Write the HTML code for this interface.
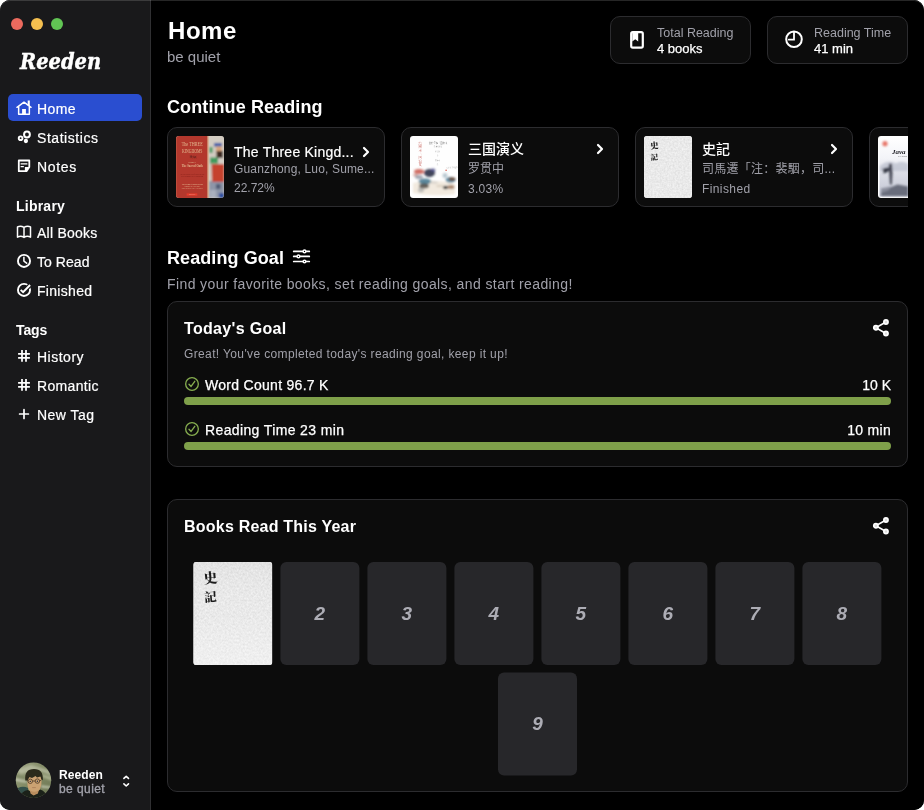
<!DOCTYPE html>
<html lang="en">
<head>
<meta charset="utf-8">
<title>Reeden</title>
<style>
*{box-sizing:border-box;margin:0;padding:0}
html,body{width:924px;height:810px;background:#fff;overflow:hidden}
body{font-family:"Liberation Sans","Noto Sans CJK SC",sans-serif;color:#fff;-webkit-font-smoothing:antialiased}
#win{will-change:transform;position:absolute;left:0;top:0;width:924px;height:810px;background:#000;border-radius:10px;overflow:hidden}
#win:after{content:"";position:absolute;left:0;top:0;right:0;bottom:0;border-radius:10px;box-shadow:inset 0 1px 0 rgba(255,255,255,.15);pointer-events:none}
#side{position:absolute;left:0;top:0;width:151px;height:810px;background:#19191b;border-right:1px solid #303032}
.abs{position:absolute;white-space:nowrap}
.tl{position:absolute;top:17.500px;width:12px;height:12px;border-radius:50%}
.logo{-webkit-text-stroke:.45px #fff;font-family:"DejaVu Serif","Liberation Serif",serif;font-weight:bold;font-style:italic;font-size:22px;top:46px;line-height:30px;color:#fff;transform:scaleX(.885);transform-origin:0 0}
.nav{position:absolute;left:8px;width:134px;height:27px;border-radius:5px}
.nav.sel{background:#2a4ed0}
.nav span{position:absolute;left:29px;top:2px;line-height:27px;font-size:14px;letter-spacing:.4px;-webkit-text-stroke:.2px #fff;color:#fff;white-space:nowrap}
.nav svg{position:absolute;left:8px;top:5px;width:16px;height:16px;fill:none;stroke:#fff;stroke-width:2;stroke-linecap:round;stroke-linejoin:round}
.sec{position:absolute;left:16px;font-size:14px;letter-spacing:.1px;font-weight:bold;line-height:20px;color:#fff}
#main{position:absolute;left:151px;top:0;width:773px;height:810px;background:#000}
.card{position:absolute;background:#0c0c0c;border:1px solid #2c2c2f;border-radius:10px}
.g{color:#a1a1aa}
.h2{font-size:18px;font-weight:bold;line-height:22px}
.tile{transform:translateX(.4px);position:absolute;width:79px;height:103px;border-radius:6px;background:#27272a;color:#adadb5;font-weight:bold;font-style:italic;font-size:19px;text-align:center;line-height:104px}
.bar{position:absolute;left:16px;width:707px;height:8px;border-radius:4px;background:#7fa04a}
</style>
</head>
<body>
<div id="win">
<div id="side">
  <div class="tl" style="left:11px;background:#ec6a5e"></div>
  <div class="tl" style="left:31px;background:#f4bf4f"></div>
  <div class="tl" style="left:51px;background:#61c554"></div>
  <div class="abs logo" style="left:20px">Reeden</div>

  <div class="nav sel" style="top:94px"><svg viewBox="0 0 16 16" style="stroke-width:1.500"><path d="M1 8.300 8 3.200l7 5.100"/><path d="M2.650 7.600v7.650h10.700V7.600" stroke-linecap="butt"/><path d="M6.100 15.200V10h3.800v5.200zM11.700 6.300V1.500h2.100v6.300z" fill="#fff" stroke="none"/></svg><span>Home</span></div>
  <div class="nav" style="top:123px"><svg viewBox="0 0 16 16"><circle cx="10.960" cy="6.500" r="2.900" stroke-width="2"/><circle cx="4.600" cy="10.200" r="1.850" stroke-width="1.900"/><circle cx="9.900" cy="13" r="2.150" fill="#fff" stroke="none"/></svg><span style="letter-spacing:0.55px">Statistics</span></div>
  <div class="nav" style="top:152px"><svg viewBox="0 0 16 16" style="stroke-width:1.800"><path d="M2.800 3.500h10.500V10l-2.800 4.200H2.800z"/><path d="M8.900 9.900h4.400l-2.800 4.300H8.900z" fill="#fff" stroke="none"/><path d="M4.600 6.900h6.800M4.600 9.700h3.250" stroke-width="1.300" stroke-linecap="butt"/></svg><span style="letter-spacing:0.65px">Notes</span></div>

  <div class="sec" style="top:196px;letter-spacing:.23px">Library</div>
  <div class="nav" style="top:218px"><svg viewBox="0 0 16 16" style="stroke-width:1.500"><path d="M8 4.400Q4.750 2.400 1.500 3.900V14.200Q4.750 12.300 8 14.400Q11.250 12.300 14.500 14.200V3.900Q11.250 2.400 8 4.400V14.400"/></svg><span style="letter-spacing:0.24px">All Books</span></div>
  <div class="nav" style="top:247px"><svg viewBox="0 0 16 16"><circle cx="8" cy="8.900" r="6.050" stroke-width="1.900"/><path d="M7.900 5.500V9.100l2.700 2" stroke-width="1.500" stroke-linecap="square"/></svg><span style="letter-spacing:0.05px">To Read</span></div>
  <div class="nav" style="top:276px"><svg viewBox="0 0 16 16"><circle cx="8" cy="8.900" r="6.050" stroke-width="1.900"/><path d="M7.100 11.200 14.100 4" stroke="#19191b" stroke-width="4.400" stroke-linecap="butt"/><path d="M4.700 8.850l2.400 2.350L14.100 4" stroke-width="2" stroke-linecap="butt" stroke-linejoin="miter"/></svg><span style="letter-spacing:0.3px">Finished</span></div>

  <div class="sec" style="top:320px;letter-spacing:-.1px">Tags</div>
  <div class="nav" style="top:342px"><svg viewBox="0 0 16 16" style="stroke-width:1.750;stroke-linecap:butt"><path d="M2.100 6.900h11.800M2.100 10.900h11.800M6 3.100v11.600M10 3.100v11.600"/></svg><span style="letter-spacing:.5px">History</span></div>
  <div class="nav" style="top:371px"><svg viewBox="0 0 16 16" style="stroke-width:1.750;stroke-linecap:butt"><path d="M2.100 6.900h11.800M2.100 10.900h11.800M6 3.100v11.600M10 3.100v11.600"/></svg><span style="letter-spacing:.33px">Romantic</span></div>
  <div class="nav" style="top:400px"><svg viewBox="0 0 16 16" style="stroke-width:1.700;stroke-linecap:round"><path d="M3.600 9h8.800M8 4.700v8.700"/></svg><span style="letter-spacing:.48px">New Tag</span></div>

  <svg class="abs" style="left:15px;top:762px" width="37" height="37" viewBox="0 0 37 37"><defs><clipPath id="av"><circle cx="18.500" cy="18.200" r="17.700"/></clipPath><linearGradient id="avg" x1="0" y1="0" x2="1" y2="1"><stop offset="0" stop-color="#a0a686"/><stop offset=".5" stop-color="#7f8862"/><stop offset="1" stop-color="#6b7553"/></linearGradient><filter id="avb" filterUnits="userSpaceOnUse" x="0" y="0" width="37" height="37"><feGaussianBlur stdDeviation=".85"/></filter></defs><g clip-path="url(#av)"><rect width="37" height="37" fill="url(#avg)"/><g filter="url(#avb)"><path d="M0 8 16 3 34 8 37 14 22 8 6 12z" fill="#c0c5aa" opacity=".7"/><path d="M0 16.800 11.500 19.300 11.500 20.600 0 18.200z" fill="#e2e5d4"/><path d="M0 13 10 15v1.500L0 14.500z" fill="#6f7a58" opacity=".7"/><path d="M26 23.600 37 25v1.600L26 25.200z" fill="#d3d7c2"/><path d="M27 12 37 15v4L27 15z" fill="#a8af8d"/></g><g><path d="M3 26Q8 23.500 13 26V31H3z" fill="#34504a"/><path d="M4 37Q6 29 13 28L18.500 31 25 27.500Q31 29 32.500 37z" fill="#1b2119"/><path d="M12.300 17Q12 13 19.300 13 26.600 13 26.600 17L26.300 23Q25.500 28 22.500 30.500 19.300 32.600 16.300 30.500 13 28 12.500 23z" fill="#cba272"/><path d="M15 28.500Q19.300 31 23.500 28.500L23 31.500 18.500 33.500 15.500 31.500z" fill="#b98e5e"/><path d="M10.300 18.500Q9 7 19 7 28.500 7 27.800 18.200L26.400 17.500 25.500 14.500 22 15.500 20.500 14 17 16 14.500 15 12.500 18.500z" fill="#2b2a1b"/></g><g fill="none" stroke="#3b2d1c" stroke-width=".7"><circle cx="15.300" cy="19.300" r="2.200"/><circle cx="22.400" cy="19.100" r="2.200"/><path d="M17.600 19h2.500M13 19l-1-.5M24.700 18.800l1.500-.5"/></g><circle cx="15.300" cy="19.400" r=".7" fill="#2b3445"/><circle cx="22.400" cy="19.200" r=".7" fill="#2b3445"/><path d="M17.200 25.600h3.600" stroke="#a87b55" stroke-width=".8"/></g></svg>
  <div class="abs" style="left:59px;top:768px;font-size:12px;font-weight:bold;line-height:15px;letter-spacing:.1px">Reeden</div>
  <div class="abs" style="left:59px;top:782px;font-size:12px;line-height:15px;color:#a1a1aa;letter-spacing:.42px;-webkit-text-stroke:.35px #a1a1aa">be quiet</div>
  <svg class="abs" style="left:120px;top:772px" width="12" height="18" viewBox="0 0 12 18" fill="none" stroke="#fff" stroke-width="1.600" stroke-linecap="round" stroke-linejoin="round"><path d="M3.900 6.400 6.200 4.300l2.300 2.100M3.900 11.900l2.300 2.100 2.300-2.100"/></svg>
</div>

<div id="main">
  <div class="abs" style="left:17px;top:16px;font-size:24px;font-weight:bold;line-height:30px;letter-spacing:.55px">Home</div>
  <div class="abs g" style="left:16px;top:47px;font-size:15px;line-height:20px">be quiet</div>

  <div class="card" style="left:459px;top:16px;width:141px;height:48px">
    <svg class="abs" style="left:17px;top:11px" width="18" height="24" viewBox="0 0 18 24" fill="none" stroke="#fff" stroke-width="2.200"><rect x="3.200" y="4.200" width="11.600" height="15.400" rx="1.600"/><path d="M4.300 4.200h5.900v9.200L7.250 11.200 4.300 13.400z" fill="#fff" stroke="none"/></svg>
    <div class="abs g" style="left:46px;top:8px;font-size:12.500px;line-height:16px">Total Reading</div>
    <div class="abs" style="left:46px;top:24px;font-size:13px;line-height:16px;-webkit-text-stroke:.25px #fff">4 books</div>
  </div>
  <div class="card" style="left:616px;top:16px;width:141px;height:48px">
    <svg class="abs" style="left:16px;top:13px" width="20" height="20" viewBox="0 0 20 20" fill="none" stroke="#fff"><circle cx="10" cy="9.300" r="7.800" stroke-width="2"/><path d="M10 2.500V9.600H4.700" stroke-width="1.800" stroke-linecap="round" stroke-linejoin="miter"/></svg>
    <div class="abs g" style="left:46px;top:8px;font-size:12.500px;line-height:16px">Reading Time</div>
    <div class="abs" style="left:46px;top:24px;font-size:13px;line-height:16px;-webkit-text-stroke:.25px #fff">41 min</div>
  </div>

  <div class="abs h2" style="left:16px;top:95.500px;letter-spacing:.1px">Continue Reading</div>
  <div id="cr" class="abs" style="left:16px;top:127px;width:741px;height:80px;overflow:hidden">

    <div class="card" style="left:0;top:0;width:218px;height:80px">
      <svg class="abs cov" style="left:8px;top:8px;border-radius:3px" width="48" height="62" viewBox="0 0 48 62"><defs><filter id="b1" filterUnits="userSpaceOnUse" x="0" y="0" width="48" height="62"><feGaussianBlur stdDeviation=".9"/></filter></defs><rect width="48" height="62" fill="#d6cec2"/><g filter="url(#b1)"><rect x="32" y="0" width="16" height="62" fill="#d3ccc2"/><rect x="33" y="45" width="15" height="17" fill="#8d95a8"/><path d="M38 7h8v3.500h-8z" fill="#3558a8"/><path d="M40 10.500h6v7.500h-6z" fill="#d9a47c"/><path d="M40.500 15h6.500v7h-6.500z" fill="#3c2b22"/><path d="M33.500 11h3v6h-3zM34 21.500h8v6h-8z" fill="#3f9a5c"/><path d="M35.500 28H48V46H36z" fill="#c5432e"/><path d="M40 48h4.500v5H40z" fill="#4f5a73"/><path d="M43 57h5v5h-5z" fill="#2d4fa0"/><path d="M34 54h6v8h-6z" fill="#a9afbd"/></g><rect width="31.600" height="62" fill="#b3382d"/><rect x="31.600" width=".9" height="62" fill="#dc9a6c"/><rect x="0" width="1" height="62" fill="#c45a45" opacity=".6"/><rect x="10.600" y="57.400" width="10.700" height="2.300" fill="#e23b2c"/><g font-family="'Liberation Serif',serif" text-anchor="middle" fill="#e9c99c" opacity=".88"><text x="16.200" y="10.300" font-size="5.400" textLength="21" lengthAdjust="spacingAndGlyphs">The THREE</text><text x="16.200" y="16.800" font-size="5.400" textLength="20.500" lengthAdjust="spacingAndGlyphs">KINGDOMS</text><text x="16.200" y="22" font-size="2.200" fill="#2a1512" font-family="'Noto Serif CJK SC',serif">三國演義</text><text x="16.200" y="27" font-size="2.200">Volume 1</text><text x="16.200" y="31" font-size="3.600" font-weight="bold" textLength="21" lengthAdjust="spacingAndGlyphs">The Sacred Oath</text><text x="16.200" y="38.600" font-size="1.800" fill="#7a1d16" textLength="24" lengthAdjust="spacingAndGlyphs">The Epic Chinese Tale of Loyalty and War</text><text x="16.200" y="40.800" font-size="1.800" fill="#7a1d16">in a Dynamic New Translation</text><text x="16.200" y="48.700" font-size="2.300" font-weight="bold">LUO GUANZHONG</text><text x="16.200" y="51" font-size="1.500">Translated by YU SUMEI</text><text x="16.200" y="52.800" font-size="1.500">Edited by RONALD C. IVERSON</text><text x="16" y="59.300" font-size="1.700" fill="#f6d9c0">TUTTLE</text></g></svg>
      <div class="abs" style="left:66px;top:14px;font-size:14px;line-height:20px;letter-spacing:.23px;-webkit-text-stroke:.2px #fff">The Three Kingd...</div>
      <div class="abs g" style="left:66px;top:33px;font-size:12px;line-height:16px;letter-spacing:.16px">Guanzhong, Luo, Sume...</div>
      <div class="abs g" style="left:66px;top:52px;font-size:12px;line-height:16px">22.72%</div>
      <svg class="abs" style="left:191px;top:16.500px" width="14" height="14" viewBox="0 0 14 14" fill="none" stroke="#fff" stroke-width="2.200" stroke-linecap="round" stroke-linejoin="round"><path d="M5 3l4 4-4 4"/></svg>
    </div>
    <div class="card" style="left:234px;top:0;width:218px;height:80px">
      <svg class="abs cov" style="left:8px;top:8px;border-radius:3px" width="48" height="62" viewBox="0 0 48 62"><defs><filter id="b2" filterUnits="userSpaceOnUse" x="0" y="0" width="48" height="62"><feGaussianBlur stdDeviation="1"/></filter></defs><rect width="48" height="62" fill="#fefefe"/><g filter="url(#b2)"><path d="M3 47Q24 42 45 48V58Q24 61 3 57z" fill="#f2eadf"/><ellipse cx="9" cy="35.500" rx="5" ry="2.600" fill="#c9584c" opacity=".85"/><ellipse cx="5.500" cy="39" rx="2.500" ry="1.500" fill="#c98a80" opacity=".7"/><ellipse cx="19.500" cy="37" rx="5.500" ry="4" fill="#2e3248" opacity=".9"/><ellipse cx="23" cy="34" rx="2.500" ry="1.500" fill="#4a4a8a" opacity=".8"/><ellipse cx="9" cy="41" rx="4" ry="2" fill="#8d95a3" opacity=".8"/><ellipse cx="15" cy="45.500" rx="6.500" ry="3" fill="#3f748d" opacity=".85"/><ellipse cx="14" cy="50" rx="5" ry="2.500" fill="#45403a" opacity=".8"/><ellipse cx="11" cy="54" rx="3" ry="2.500" fill="#8a8f94" opacity=".5"/><ellipse cx="24" cy="46.500" rx="4" ry="1.200" fill="#d9d4cc"/><ellipse cx="35" cy="39.500" rx="2.500" ry="2.500" fill="#a9bcc7" opacity=".8"/><ellipse cx="40.500" cy="44" rx="5" ry="3" fill="#4d819c" opacity=".85"/><ellipse cx="42" cy="43" rx="3.500" ry="1.800" fill="#6b4630" opacity=".9"/><ellipse cx="35.500" cy="51.500" rx="2.600" ry="1.700" fill="#151515" opacity=".9"/><ellipse cx="41" cy="51" rx="3.500" ry="2" fill="#8f6246" opacity=".75"/><ellipse cx="30" cy="50" rx="4" ry="1" fill="#d8cdbd"/></g><g font-family="'Noto Serif CJK SC',serif"><text font-size="3.400" fill="#c45a52" x="8.500 8.500 8.500 8.500 8.500 8.500 8.500" y="8.6 12.2 15.8 19.4 23.0 26.6 30.2">绘图本三国演义</text><text x="28" y="8.300" font-size="2.300" fill="#4a4a4a" text-anchor="middle">彩绘全本三国演义</text><text x="28" y="10.800" font-size="1.700" fill="#777" text-anchor="middle">绘·精·装·版</text><text x="27.500" y="16" font-size="1.700" fill="#666" text-anchor="middle">罗贯中</text><text x="27.500" y="19.800" font-size="1.500" fill="#888" text-anchor="middle">著</text><text x="27.500" y="25" font-size="1.700" fill="#666" text-anchor="middle">金协中</text><text x="27.500" y="28.800" font-size="1.500" fill="#888" text-anchor="middle">绘</text><text x="42" y="32" font-size="1.700" fill="#777" text-anchor="middle">人民文学出版社</text></g><circle cx="36.100" cy="34.300" r=".7" fill="#d0453a"/></svg>
      <div class="abs" style="left:66px;top:11px;font-size:14px;line-height:20px;font-weight:500">三国演义</div>
      <div class="abs g" style="left:66px;top:33px;font-size:12px;line-height:16px">罗贯中</div>
      <div class="abs g" style="left:66px;top:53px;font-size:12px;line-height:16px;letter-spacing:.3px">3.03%</div>
      <svg class="abs" style="left:191px;top:14px" width="14" height="14" viewBox="0 0 14 14" fill="none" stroke="#fff" stroke-width="2.200" stroke-linecap="round" stroke-linejoin="round"><path d="M5 3l4 4-4 4"/></svg>
    </div>
    <div class="card" style="left:468px;top:0;width:218px;height:80px">
      <svg class="abs cov" style="left:8px;top:8px;border-radius:3px" width="48" height="62" viewBox="0 0 48 62"><defs><filter id="n3" x="0" y="0" width="100%" height="100%" color-interpolation-filters="sRGB"><feTurbulence type="fractalNoise" baseFrequency=".55" numOctaves="2" seed="3"/><feColorMatrix type="matrix" values=".13 0 0 0 .85  .13 0 0 0 .85  .13 0 0 0 .85  0 0 0 0 1"/><feComposite in2="SourceGraphic" operator="in"/></filter></defs><rect width="48" height="62" fill="#e9e9e9"/><rect width="48" height="62" fill="#e9e9e9" filter="url(#n3)"/><g font-family="'Noto Serif CJK SC','Noto Serif CJK JP',serif" font-weight="900" fill="#1c1c1c" text-anchor="middle"><text x="10.300" y="12.600" font-size="8.500" transform="rotate(-6 10.300 9)">史</text><text x="10.300" y="24" font-size="7.500" transform="rotate(-4 10.300 21)">記</text></g></svg>
      <div class="abs" style="left:66px;top:11px;font-size:14px;line-height:20px;font-weight:500">史記</div>
      <div class="abs g" style="left:66px;top:33px;font-size:12px;line-height:16px;letter-spacing:.25px">司馬遷「注：裴駰，司...</div>
      <div class="abs g" style="left:66px;top:53px;font-size:12px;line-height:16px;letter-spacing:.4px">Finished</div>
      <svg class="abs" style="left:191px;top:14px" width="14" height="14" viewBox="0 0 14 14" fill="none" stroke="#fff" stroke-width="2.200" stroke-linecap="round" stroke-linejoin="round"><path d="M5 3l4 4-4 4"/></svg>
    </div>
    <div class="card" style="left:702px;top:0;width:218px;height:80px">
      <svg class="abs cov" style="left:8px;top:8px;border-radius:3px" width="48" height="62" viewBox="0 0 48 62"><defs><linearGradient id="g4" x1="0" y1="0" x2="0" y2="1"><stop offset="0" stop-color="#ffffff"/><stop offset=".35" stop-color="#f3f4f8"/><stop offset=".6" stop-color="#dcdee7"/><stop offset="1" stop-color="#c3c6d3"/></linearGradient><filter id="b4" filterUnits="userSpaceOnUse" x="0" y="0" width="48" height="62"><feGaussianBlur stdDeviation=".85"/></filter></defs><rect width="48" height="62" fill="#fff"/><rect x="1.500" y="1.500" width="45" height="59" fill="url(#g4)"/><g filter="url(#b4)"><circle cx="7" cy="7.700" r="2.600" fill="#e8776a"/><path d="M2 30Q10 23 18 27.500 24 24 30 28V35H2z" fill="#b9bdcc" opacity=".7"/><path d="M10.800 28.500h3.200l.5 8.500-.7 11.500H12L11.300 38z" fill="#444754"/><path d="M11 31.500Q6.500 31.500 4 33.500 6.500 35 5 37.500 9 36.800 11.300 34.500z" fill="#383b47"/><circle cx="12.500" cy="28.600" r="1.200" fill="#3a3a44"/><path d="M3 55.500 19.500 48.500 30 50.500V60H3z" fill="#696d7b"/><path d="M3 52.500 13 50.500 11 54 3 57z" fill="#8b8f9d"/></g><text x="14" y="17.800" font-family="'Liberation Serif',serif" font-style="italic" font-weight="bold" font-size="7" fill="#1b1b22">Java</text><text x="20" y="20.800" font-family="'Liberation Sans',sans-serif" font-size="1.600" fill="#666">JAVA CORE</text></svg>
    </div>
  </div>

  <div class="abs h2" style="left:16px;top:247px;letter-spacing:.08px">Reading Goal</div>
  <svg class="abs" style="left:141px;top:247px" width="20" height="20" viewBox="0 0 20 20" fill="none" stroke="#fff" stroke-width="1.700" stroke-linecap="round"><path d="M1.700 4.400h15.600M1.700 9.400h15.600M1.700 14.500h15.600"/><g fill="#000" stroke-width="1.500"><circle cx="12.500" cy="4.400" r="1.350"/><circle cx="6.450" cy="9.400" r="1.350"/><circle cx="12.500" cy="14.500" r="1.350"/></g></svg>
  <div class="abs g" style="left:16px;top:274px;font-size:14px;line-height:20px;letter-spacing:.4px">Find your favorite books, set reading goals, and start reading!</div>

  <div class="card" style="left:16px;top:301px;width:741px;height:166px">
    <div class="abs" style="left:16px;top:17px;font-size:16px;font-weight:bold;line-height:20px;letter-spacing:.33px">Today's Goal</div>
    <div class="abs g" style="left:16px;top:44px;font-size:12px;line-height:16px;letter-spacing:.37px">Great! You've completed today's reading goal, keep it up!</div>
    <svg class="abs" style="left:16px;top:74px" width="16" height="16" viewBox="0 0 24 24" fill="none" stroke="#86ad4f" stroke-width="2" stroke-linecap="round" stroke-linejoin="round"><circle cx="12" cy="12" r="9.500"/><path d="M7.500 12.300l3.150 3.400 5.500-7.800"/></svg>
    <div class="abs" style="left:37px;top:73px;font-size:14px;line-height:20px;letter-spacing:.29px;-webkit-text-stroke:.25px #fff">Word Count 96.7 K</div>
    <div class="abs" style="right:16px;top:73px;font-size:14px;line-height:20px;-webkit-text-stroke:.25px #fff">10 K</div>
    <div class="bar" style="top:95px"></div>
    <svg class="abs" style="left:16px;top:119px" width="16" height="16" viewBox="0 0 24 24" fill="none" stroke="#86ad4f" stroke-width="2" stroke-linecap="round" stroke-linejoin="round"><circle cx="12" cy="12" r="9.500"/><path d="M7.500 12.300l3.150 3.400 5.500-7.800"/></svg>
    <div class="abs" style="left:37px;top:118px;font-size:14px;line-height:20px;letter-spacing:.37px;-webkit-text-stroke:.25px #fff">Reading Time 23 min</div>
    <div class="abs" style="right:16px;top:118px;font-size:14px;line-height:20px;letter-spacing:.28px;-webkit-text-stroke:.25px #fff">10 min</div>
    <div class="bar" style="top:140px"></div>
    <svg class="abs share" style="left:703px;top:16px" width="20" height="20" viewBox="0 0 20 20" fill="none" stroke="#fff" stroke-width="1.600" stroke-linecap="round"><path d="M14.950 3.960 4.870 9.700l10.080 5.800"/><g fill="#dcdcdc" stroke-width="1.700"><circle cx="14.950" cy="3.960" r="2.100"/><circle cx="4.870" cy="9.700" r="2.100"/><circle cx="14.950" cy="15.500" r="2.100"/></g></svg>
  </div>

  <div class="card" style="left:16px;top:499px;width:741px;height:293px">
    <div class="abs" style="left:16px;top:17px;font-size:16px;font-weight:bold;line-height:20px;letter-spacing:.22px">Books Read This Year</div>
    <svg class="abs share" style="left:703px;top:16px" width="20" height="20" viewBox="0 0 20 20" fill="none" stroke="#fff" stroke-width="1.600" stroke-linecap="round"><path d="M14.950 3.960 4.870 9.700l10.080 5.800"/><g fill="#dcdcdc" stroke-width="1.700"><circle cx="14.950" cy="3.960" r="2.100"/><circle cx="4.870" cy="9.700" r="2.100"/><circle cx="14.950" cy="15.500" r="2.100"/></g></svg>
    <svg class="abs" style="left:25px;top:62px;border-radius:3px;transform:translateX(.3px)" width="79" height="103" viewBox="0 0 79 103"><defs><filter id="n5" x="0" y="0" width="100%" height="100%" color-interpolation-filters="sRGB"><feTurbulence type="fractalNoise" baseFrequency=".5" numOctaves="2" seed="7"/><feColorMatrix type="matrix" values=".13 0 0 0 .85  .13 0 0 0 .85  .13 0 0 0 .85  0 0 0 0 1"/><feComposite in2="SourceGraphic" operator="in"/></filter></defs><rect width="79" height="103" fill="#e9e9e9"/><rect width="79" height="103" fill="#e9e9e9" filter="url(#n5)"/><linearGradient id="lg5" x1="0" y1="0" x2="0" y2="1"><stop offset="0" stop-color="#000" stop-opacity=".03"/><stop offset=".5" stop-color="#fff" stop-opacity="0"/><stop offset="1" stop-color="#fff" stop-opacity=".3"/></linearGradient><rect width="79" height="103" fill="url(#lg5)"/><g font-family="'Noto Serif CJK SC','Noto Serif CJK JP',serif" font-weight="900" fill="#1c1c1c" text-anchor="middle"><text x="17" y="21" font-size="14" transform="rotate(-6 17 15)">史</text><text x="17" y="39.500" font-size="12.500" transform="rotate(-4 17 34)">記</text></g></svg>
    <div class="tile" style="left:112px;top:62px">2</div>
    <div class="tile" style="left:199px;top:62px">3</div>
    <div class="tile" style="left:286px;top:62px">4</div>
    <div class="tile" style="left:373px;top:62px">5</div>
    <div class="tile" style="left:460px;top:62px">6</div>
    <div class="tile" style="left:547px;top:62px">7</div>
    <div class="tile" style="left:634px;top:62px">8</div>
    <div class="tile" style="left:330px;top:173px;transform:translateY(-.6px)">9</div>
  </div>
</div>
</div>
</body>
</html>
